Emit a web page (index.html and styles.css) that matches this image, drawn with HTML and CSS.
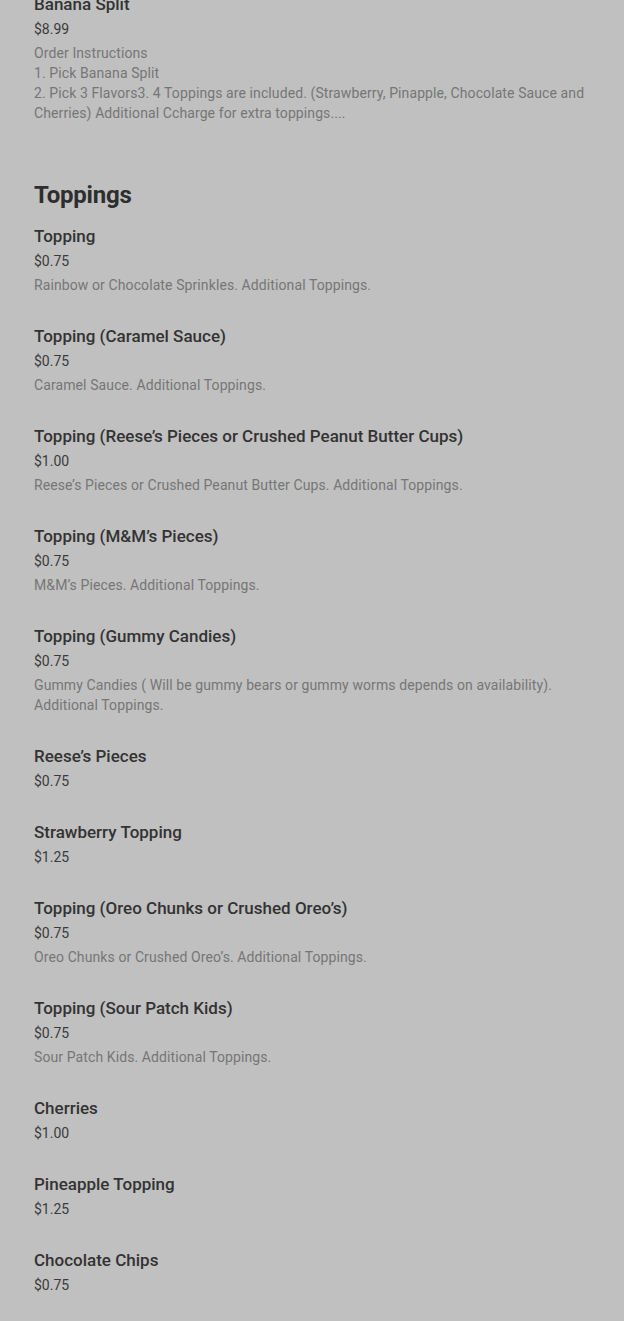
FILE: index.html
```html
<!DOCTYPE html>
<html lang="en">
<head>
<meta charset="utf-8">
<title>Menu</title>
<link rel="stylesheet" href="styles.css">
</head>
<body>
<main class="menu">
  <section class="section">
    <article class="item">
      <h3 class="item-title">Banana Split</h3>
      <div class="item-price">$8.99</div>
      <p class="item-desc">Order Instructions<br>1. Pick Banana Split<br>2. Pick 3 Flavors3. 4 Toppings are included. (Strawberry, Pinapple, Chocolate Sauce and Cherries) Additional Ccharge for extra toppings....</p>
    </article>
  </section>
  <section class="section">
    <h2 class="section-title">Toppings</h2>
    <div class="items">
      <article class="item">
        <h3 class="item-title">Topping</h3>
        <div class="item-price">$0.75</div>
        <p class="item-desc">Rainbow or Chocolate Sprinkles. Additional Toppings.</p>
      </article>
      <article class="item">
        <h3 class="item-title">Topping (Caramel Sauce)</h3>
        <div class="item-price">$0.75</div>
        <p class="item-desc">Caramel Sauce. Additional Toppings.</p>
      </article>
      <article class="item">
        <h3 class="item-title">Topping (Reese’s Pieces or Crushed Peanut Butter Cups)</h3>
        <div class="item-price">$1.00</div>
        <p class="item-desc">Reese’s Pieces or Crushed Peanut Butter Cups. Additional Toppings.</p>
      </article>
      <article class="item">
        <h3 class="item-title">Topping (M&amp;M’s Pieces)</h3>
        <div class="item-price">$0.75</div>
        <p class="item-desc">M&amp;M’s Pieces. Additional Toppings.</p>
      </article>
      <article class="item">
        <h3 class="item-title">Topping (Gummy Candies)</h3>
        <div class="item-price">$0.75</div>
        <p class="item-desc">Gummy Candies ( Will be gummy bears or gummy worms depends on availability). Additional Toppings.</p>
      </article>
      <article class="item">
        <h3 class="item-title">Reese’s Pieces</h3>
        <div class="item-price">$0.75</div>
      </article>
      <article class="item">
        <h3 class="item-title">Strawberry Topping</h3>
        <div class="item-price">$1.25</div>
      </article>
      <article class="item">
        <h3 class="item-title">Topping (Oreo Chunks or Crushed Oreo’s)</h3>
        <div class="item-price">$0.75</div>
        <p class="item-desc">Oreo Chunks or Crushed Oreo’s. Additional Toppings.</p>
      </article>
      <article class="item">
        <h3 class="item-title">Topping (Sour Patch Kids)</h3>
        <div class="item-price">$0.75</div>
        <p class="item-desc">Sour Patch Kids. Additional Toppings.</p>
      </article>
      <article class="item">
        <h3 class="item-title">Cherries</h3>
        <div class="item-price">$1.00</div>
      </article>
      <article class="item">
        <h3 class="item-title">Pineapple Topping</h3>
        <div class="item-price">$1.25</div>
      </article>
      <article class="item">
        <h3 class="item-title">Chocolate Chips</h3>
        <div class="item-price">$0.75</div>
      </article>
    </div>
  </section>
</main>
</body>
</html>
```
FILE: styles.css
```css
html, body {
  margin: 0;
  padding: 0;
  background: #c0c0c0;
}
body {
  font-family: Roboto, "Noto Sans", sans-serif;
  color: #2f2f2f;
  overflow: hidden;
}
.menu {
  margin-top: -8px;
  padding: 0 34px;
  display: flex;
  flex-direction: column;
  gap: 56px;
}
.section-title {
  margin: 0 0 13px;
  font-size: 24px;
  line-height: 32px;
  font-weight: 700;
  color: #2e2e2e;
  letter-spacing: -0.2px;
}
.items {
  display: flex;
  flex-direction: column;
  gap: 29px;
}
.item-title {
  margin: 0;
  font-size: 17px;
  line-height: 24px;
  font-weight: 500;
  color: #333333;
}
.item-price {
  margin-top: 3px;
  font-size: 14px;
  line-height: 20px;
  color: #3b3b3b;
}
.item-desc {
  margin: 4px 0 0;
  font-size: 14px;
  line-height: 20px;
  letter-spacing: 0.1px;
  color: #767676;
}
```
